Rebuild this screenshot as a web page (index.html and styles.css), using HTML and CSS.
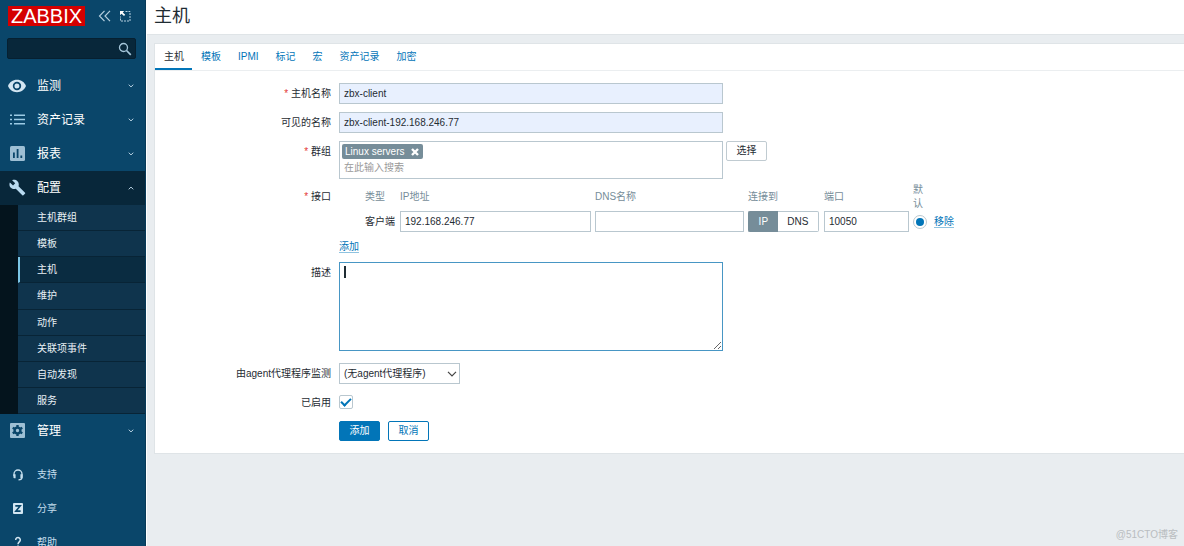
FILE: index.html
```
<!DOCTYPE html>
<html lang="zh-CN">
<head>
<meta charset="utf-8">
<title>主机</title>
<link rel="stylesheet" href="styles.css">
</head>
<body>
<div class="app">
  <aside class="sidebar">
    <div class="brand">
      <a class="logo" href="#">ZABBIX</a>
      <button class="icon-btn" type="button" aria-label="收起">
        <svg width="14" height="12" viewBox="0 0 14 12"><path d="M6.500 .8 1.500 6l5 5.200M12 .8 7 6l5 5.200" fill="none" stroke="currentColor" stroke-width="1.200"/></svg>
      </button>
      <button class="icon-btn" type="button" aria-label="隐藏">
        <svg width="12" height="12" viewBox="0 0 12 12"><path d="M6.500 1.500H11V11H1.500V6.500" fill="none" stroke="currentColor" stroke-width="1" stroke-dasharray="2 1"/><path d="M1 1h4.200L3.800 2.400 6.200 4.800 5 6 2.500 3.700 1 5.200z" fill="#fff"/></svg>
      </button>
    </div>
    <form class="search" role="search">
      <input type="search" aria-label="搜索">
      <button type="submit" aria-label="搜索">
        <svg width="14" height="14" viewBox="0 0 14 14" fill="none" stroke="currentColor"><circle cx="5.500" cy="5.500" r="4" stroke-width="1.300"/><path d="m8.500 8.500 4.300 4.300" stroke-width="1.700"/></svg>
      </button>
    </form>
    <nav class="menu">
      <a class="menu-item" href="#">
        <svg class="ico" viewBox="0 0 18 18"><path fill="#d3e6f2" fill-rule="evenodd" d="M9 2.800C4.800 2.800 1.400 5.300 0 9c1.400 3.700 4.800 6.200 9 6.200s7.600-2.500 9-6.200c-1.400-3.700-4.800-6.200-9-6.200zm0 10.400A4.200 4.200 0 1 1 9 4.800a4.200 4.200 0 0 1 0 8.400zM9 6.500a2.500 2.500 0 1 0 0 5 2.500 2.500 0 0 0 0-5z"/></svg>
        <span>监测</span><svg class="chev" viewBox="0 0 6 4"><path d="m.7.700 2.300 2.200L5.300.7"/></svg>
      </a>
      <a class="menu-item" href="#">
        <svg class="ico" viewBox="0 0 18 18"><path fill="#9ccbe5" d="M2 3.500h2V5H2zm4 0h11V5H6zM2 7.700h2v1.500H2zm4 0h11v1.500H6zM2 12h2v1.500H2zm4 0h11v1.500H6z"/></svg>
        <span>资产记录</span><svg class="chev" viewBox="0 0 6 4"><path d="m.7.700 2.300 2.200L5.300.7"/></svg>
      </a>
      <a class="menu-item" href="#">
        <svg class="ico" viewBox="0 0 18 18"><rect x="2" y="1" width="15" height="15" rx="1.500" fill="#9dbfd4"/><path fill="#0a466a" d="M5 7.500h1.800V13H5zM8.700 4h1.800v9H8.700zm3.700 6.500h1.800V13h-1.800z"/></svg>
        <span>报表</span><svg class="chev" viewBox="0 0 6 4"><path d="m.7.700 2.300 2.200L5.300.7"/></svg>
      </a>
      <a class="menu-item open" href="#">
        <svg class="ico" viewBox="-1 0 25 25"><path fill="#b8daf0" d="m22.700 19-9.100-9.100c.9-2.300.4-5-1.500-6.900-2-2-5-2.400-7.400-1.300L9 6 6 9 1.600 4.700C.4 7.100.9 10.100 2.900 12.100c1.900 1.900 4.600 2.400 6.900 1.500l9.100 9.100c.4.400 1 .4 1.400 0l2.300-2.300c.5-.4.500-1.100.1-1.400z"/></svg>
        <span>配置</span><svg class="chev" viewBox="0 0 6 4"><path d="M.7 3.300 3 1.100l2.300 2.200"/></svg>
      </a>
      <div class="submenu">
        <a href="#">主机群组</a>
        <a href="#">模板</a>
        <a class="current" href="#">主机</a>
        <a href="#">维护</a>
        <a href="#">动作</a>
        <a href="#">关联项事件</a>
        <a href="#">自动发现</a>
        <a href="#">服务</a>
      </div>
      <a class="menu-item" href="#">
        <svg class="ico" viewBox="0 0 18 18"><rect x="2" y="1" width="15" height="15" rx="1" fill="#9dbfd4"/><g stroke="#0a466a" fill="none" stroke-width="2.400"><circle cx="9.500" cy="8.500" r="2.900"/><path d="M9.500 3v2M9.500 12v2M4.700 5.750l1.800 1M12.500 10.250l1.800 1M4.700 11.250l1.800-1M12.500 6.750l1.800-1"/></g></svg>
        <span>管理</span><svg class="chev" viewBox="0 0 6 4"><path d="m.7.700 2.300 2.200L5.300.7"/></svg>
      </a>
    </nav>
    <nav class="help">
      <a href="#">
        <svg class="ico" viewBox="0 0 18 18"><path fill="none" stroke="#c5dfee" stroke-width="1.300" d="M6 10V8a4 4 0 0 1 8 0v3.500c0 1.500-1 2.200-3.500 2.300"/><path fill="#c5dfee" d="M5.400 8.200h2.200v4H6.400a1 1 0 0 1-1-1zm7 0h2.200v3a1 1 0 0 1-1 1h-1.200z"/></svg>
        <span>支持</span>
      </a>
      <a href="#">
        <svg class="ico" viewBox="0 0 18 18"><rect x="5" y="3" width="10" height="11" rx="1" fill="#d3e6f2"/><path fill="none" stroke="#0a466a" stroke-width="1.600" d="M7.300 5.900h4.900L7.900 11.100h4.700"/></svg>
        <span>分享</span>
      </a>
      <a href="#">
        <svg class="ico" viewBox="0 0 18 18"><path fill="none" stroke="#d3e6f2" stroke-width="1.500" d="M7.700 6a2.300 2.300 0 1 1 3.800 1.600c-1 .9-1.500 1.200-1.500 2.700"/><path fill="#d3e6f2" d="M9.200 11.500h1.600v1.600H9.200z"/></svg>
        <span>帮助</span>
      </a>
    </nav>
  </aside>

  <main class="page">
    <header class="title"><h1>主机</h1></header>
    <section class="card">
      <nav class="tabs">
        <a class="active" href="#">主机</a>
        <a href="#">模板</a>
        <a href="#">IPMI</a>
        <a href="#">标记</a>
        <a href="#">宏</a>
        <a href="#">资产记录</a>
        <a href="#">加密</a>
      </nav>
      <form class="form">
        <label class="lbl req" for="host">主机名称</label>
        <div><input class="text wide filled" id="host" type="text" value="zbx-client"></div>

        <label class="lbl" for="visible">可见的名称</label>
        <div><input class="text wide filled" id="visible" type="text" value="zbx-client-192.168.246.77"></div>

        <label class="lbl req" for="groups">群组</label>
        <div class="group-row">
          <div class="multi wide">
            <span class="chip">Linux servers
              <button type="button" aria-label="移除 Linux servers"><svg width="8" height="8" viewBox="0 0 8 8"><path d="m1 1 6 6M7 1 1 7" stroke="#fff" stroke-width="2.400"/></svg></button>
            </span>
            <input id="groups" type="text" placeholder="在此输入搜索">
          </div>
          <button class="btn grey" type="button">选择</button>
        </div>

        <span class="lbl req iface-lbl">接口</span>
        <div class="iface">
          <table>
            <colgroup><col class="c-type"><col class="c-ip"><col class="c-dns"><col class="c-conn"><col class="c-port"><col class="c-def"><col class="c-act"></colgroup>
            <thead>
              <tr><th>类型</th><th>IP地址</th><th>DNS名称</th><th>连接到</th><th>端口</th><th>默认</th><th></th></tr>
            </thead>
            <tbody>
              <tr>
                <td>客户端</td>
                <td><input class="text" type="text" aria-label="IP地址" value="192.168.246.77"></td>
                <td><input class="text" type="text" aria-label="DNS名称"></td>
                <td>
                  <div class="segment">
                    <input type="radio" name="useip" id="use-ip" checked><label for="use-ip">IP</label>
                    <input type="radio" name="useip" id="use-dns"><label for="use-dns">DNS</label>
                  </div>
                </td>
                <td><input class="text" type="text" aria-label="端口" value="10050"></td>
                <td><input class="radio" type="radio" name="main" aria-label="默认" checked></td>
                <td><a class="link" href="#">移除</a></td>
              </tr>
            </tbody>
          </table>
          <a class="link" href="#">添加</a>
        </div>

        <label class="lbl" for="desc">描述</label>
        <div class="area wide"><textarea id="desc"></textarea><i class="caret"></i></div>

        <label class="lbl" for="proxy">由agent代理程序监测</label>
        <div class="select">
          <select id="proxy"><option>(无agent代理程序)</option></select>
          <svg width="10" height="6" viewBox="0 0 10 6"><path d="m1 .8 4 4 4-4" fill="none" stroke="#444" stroke-width="1.200"/></svg>
        </div>

        <label class="lbl" for="enabled">已启用</label>
        <div class="check-row"><input class="check" id="enabled" type="checkbox" checked></div>

        <div class="actions">
          <button class="btn primary" type="submit">添加</button>
          <button class="btn" type="button">取消</button>
        </div>
      </form>
    </section>
    <footer class="mark">@51CTO博客</footer>
  </main>
</div>
</body>
</html>
```
FILE: styles.css
```
* { box-sizing: border-box; }

body {
  margin: 0;
  background: #e9edf0;
  color: #1f2c33;
  font: 10px/14px "Liberation Sans", "Noto Sans CJK SC", sans-serif;
}

input, button, select, textarea { font: inherit; color: inherit; margin: 0; }
a { color: #0275b8; text-decoration: none; }
svg { display: block; }

.app { display: flex; height: 100vh; overflow: hidden; }

/* Sidebar */
.sidebar {
  flex: none;
  width: 146px;
  overflow: hidden;
  background: #0a466a;
  border-right: 1px solid #083a58;
}

.brand { display: flex; align-items: center; padding: 6px 0 0 8px; }
.logo {
  width: 77px;
  margin-right: 13px;
  background: #d40000;
  color: #fff;
  font-size: 20px;
  line-height: 20px;
  text-align: center;
}
.icon-btn { padding: 0; margin-right: 7px; border: 0; background: none; color: #b5cfdf; }

.search {
  display: flex;
  align-items: center;
  height: 21px;
  margin: 12px 9px 10px 7px;
  padding-right: 3px;
  background: #08273a;
  border: 1px solid #062031;
  border-radius: 2px;
}
.search input { flex: 1; min-width: 0; border: 0; background: none; color: #fff; outline: 0; }
.search button { padding: 0; border: 0; background: none; color: #a5c6da; }

.menu-item {
  display: flex;
  align-items: center;
  height: 34px;
  padding: 0 11px 0 8px;
  color: #fff;
  font-size: 12px;
}
.menu-item span { flex: 1; }
.menu-item.open { background: #08273a; }
.ico { width: 18px; height: 18px; margin-right: 11px; }
.chev { width: 6px; height: 4px; fill: none; stroke: #b5cfdf; }

.submenu { display: flex; flex-direction: column; height: 209px; border-left: 18px solid #04141d; background: #0f344d; }
.submenu a {
  flex: 1;
  padding-left: 19px;
  border-bottom: 1px solid #082436;
  color: #e8f0f5;
  line-height: 25px;
}
.submenu .current { padding-left: 17px; border-left: 2px solid #7cc6e6; background: #0a2c41; }

.help { padding-top: 10px; }
.help a { display: flex; align-items: center; height: 34px; padding-left: 8px; color: #c5dfee; }

/* Page */
.page { flex: 1; min-width: 0; display: flex; flex-direction: column; border-left: 1px solid #fff; }
.title { padding: 4px 7px 6px; background: #fff; border-bottom: 1px solid #dfe4e7; }
h1 { margin: 0; font-size: 18px; line-height: 24px; font-weight: 400; }

.card { margin: 8px 0 0 7px; background: #fff; border: 1px solid #dfe4e7; border-right: 0; }
.tabs { display: flex; border-bottom: 1px solid #ebeef0; }
.tabs a { padding: 5px 8px 4px 9px; line-height: 15px; border-bottom: 2px solid transparent; }
.tabs .active { color: #1f2c33; border-color: #0275b8; }

/* Form */
.form {
  display: grid;
  grid-template-columns: 176px 1fr;
  column-gap: 8px;
  row-gap: 8px;
  padding: 12px 0;
}
.lbl { padding-top: 4px; text-align: right; }
.req::before { content: "* "; color: #e33734; }
.wide { width: 384px; max-width: 100%; }

.text { display: block; width: 100%; height: 21px; padding: 0 4px; border: 1px solid #b9c7cf; background: #fff; }
.text.wide { width: 384px; }
.filled { background: #e8f0fe; }

.group-row { display: flex; align-items: flex-start; gap: 3px; }
.multi { padding: 2px; border: 1px solid #b9c7cf; }
.chip {
  display: flex;
  align-items: center;
  gap: 7px;
  width: max-content;
  height: 15px;
  padding: 0 4px 0 3px;
  background: #768d99;
  border-radius: 2px;
  color: #fff;
}
.chip button { padding: 0; border: 0; background: none; }
.multi input { display: block; width: 100%; height: 17px; padding: 0 2px; border: 0; outline: 0; }
.multi input::placeholder { color: #999; }

.btn {
  min-width: 41px;
  height: 20px;
  padding: 0 9px;
  border: 1px solid #0275b8;
  border-radius: 2px;
  background: #fff;
  color: #0275b8;
}
.btn.grey { border-color: #c0cbd1; color: #1f2c33; }
.btn.primary { background: #0275b8; color: #fff; }

.iface-lbl { padding-top: 3px; }
.iface table { width: 620px; table-layout: fixed; border-collapse: collapse; margin: -4px 0 8px; }
.iface th, .iface td { padding: 0; text-align: left; vertical-align: middle; font-weight: 400; }
.iface th { height: 28px; color: #768d99; }
.iface th:first-child, .iface td:first-child { padding-left: 26px; white-space: nowrap; }
.iface .text { width: calc(100% - 4px); }
.c-type { width: 61px; }
.c-ip { width: 195px; }
.c-dns { width: 153px; }
.c-conn { width: 76px; }
.c-port { width: 89px; }
.c-def { width: 21px; }
.iface th:nth-child(6) { padding-right: 10px; }

.segment { display: flex; width: 71px; }
.segment input { position: absolute; opacity: 0; }
.segment label {
  flex: auto;
  height: 21px;
  border: 1px solid #b9c7cf;
  line-height: 19px;
  text-align: center;
}
.segment label:first-of-type { border-right: 0; border-radius: 2px 0 0 2px; }
.segment label:last-of-type { border-left: 0; border-radius: 0 2px 2px 0; }
.segment input:checked + label { background: #768d99; border-color: #768d99; color: #fff; }

.radio {
  appearance: none;
  display: grid;
  place-items: center;
  width: 14px;
  height: 14px;
  border: 1px solid #b9c7cf;
  border-radius: 50%;
}
.radio:checked::before { content: ""; width: 8px; height: 8px; border-radius: 50%; background: #0275b8; }
.link { border-bottom: 1px solid #8fc3e0; }

.area { position: relative; }
.area textarea {
  display: block;
  width: 100%;
  height: 89px;
  padding: 4px;
  border: 1px solid #4796c4;
  outline: 0;
  resize: vertical;
}
.caret { position: absolute; left: 5px; top: 4px; width: 2px; height: 12px; background: #1f2c33; }

.select { display: grid; align-items: center; justify-items: end; width: 121px; margin-top: 4px; }
.select select, .select svg { grid-area: 1 / 1; }
.select select { appearance: none; width: 100%; height: 21px; padding: 0 4px; border: 1px solid #b9c7cf; background: #fff; }
.select svg { margin-right: 3px; pointer-events: none; }
.lbl[for="proxy"] { padding-top: 8px; }

.check-row { padding: 3px 0 4px; }
.check { appearance: none; display: grid; place-items: center; width: 14px; height: 14px; border: 1px solid #b9c7cf; border-radius: 2px; }
.check:checked::before {
  content: "";
  width: 8px;
  height: 4px;
  margin-bottom: 2px;
  border: solid #0275b8;
  border-width: 0 0 2px 2px;
  transform: rotate(-45deg);
}

.actions { grid-column: 2; display: flex; gap: 8px; }
.mark { margin-top: auto; padding: 0 6px 4px; color: #b9bdc0; text-align: right; }
```
